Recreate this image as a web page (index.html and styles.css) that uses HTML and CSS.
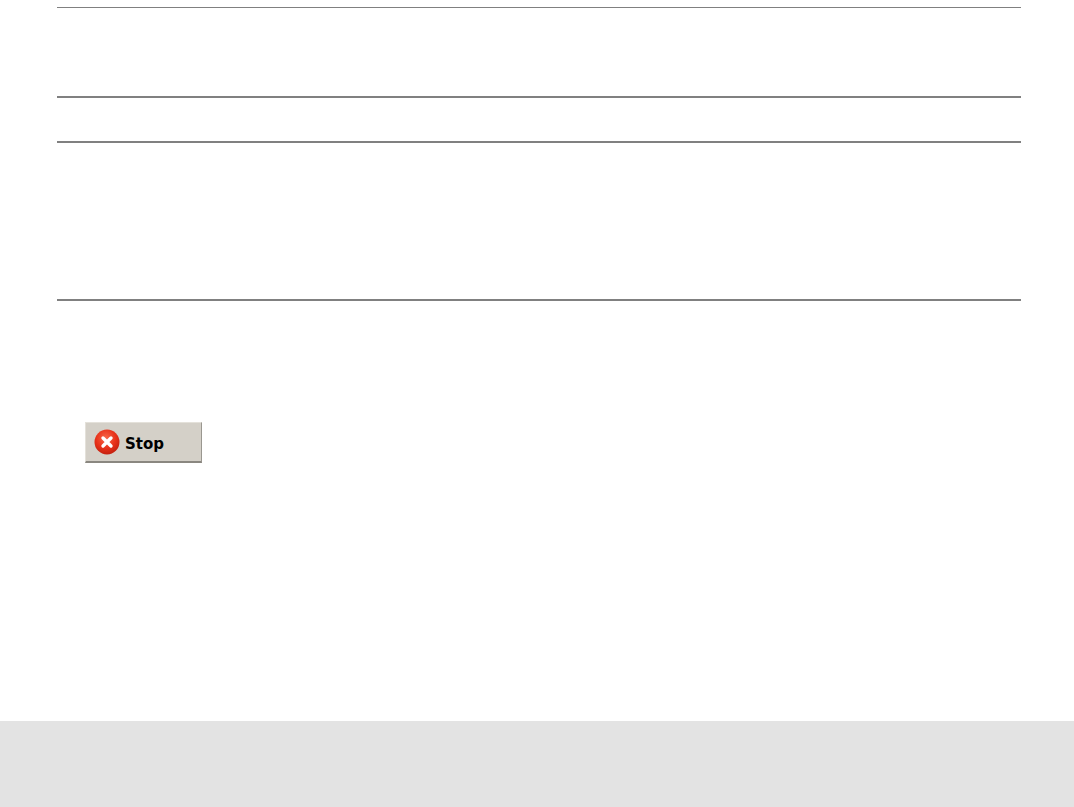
FILE: index.html
```html
<!DOCTYPE html>
<html lang="en">
<head>
    <meta charset="UTF-8">
    <title>Stop</title>
    <link rel="stylesheet" href="styles.css">
</head>
<body>
    <div class="content">
        <div class="rule rule_a"></div>
        <div class="rule rule_b"></div>
        <div class="rule rule_c"></div>
        <div class="rule rule_d"></div>
        <button class="stop_btn" type="button">
            <svg class="stop_icon" width="26" height="26" viewBox="0 0 26 26">
                <defs>
                    <radialGradient id="stopFill" cx="45%" cy="35%" r="65%">
                        <stop offset="0" stop-color="#f8694a"/>
                        <stop offset="0.6" stop-color="#e8321a"/>
                        <stop offset="1" stop-color="#c4200e"/>
                    </radialGradient>
                </defs>
                <circle cx="13" cy="13" r="12.5" fill="url(#stopFill)"/>
                <path d="M9 9 L17 17 M17 9 L9 17" stroke="#fff" stroke-width="3.4" stroke-linecap="round" fill="none"/>
            </svg>
            <span class="stop_text">Stop</span>
        </button>
    </div>
    <div class="footer"></div>
</body>
</html>
```

FILE: styles.css
```css
* {
    margin: 0;
    padding: 0;
    border: 0;
}
html, body {
    height: 100%;
    background-color: #fff;
}
body {
    display: flex;
    flex-direction: column;
    height: 807px;
    overflow: hidden;
}
.content {
    flex: 1;
    padding: 7px 53px 0 57px;
}
.rule {
    height: 2px;
    background-color: #808080;
}
.rule_a {
    height: 1px;
}
.rule_b {
    margin-top: 88px;
}
.rule_c {
    margin-top: 43px;
}
.rule_d {
    margin-top: 156px;
}
.stop_btn {
    display: flex;
    align-items: center;
    width: 117px;
    height: 41px;
    margin: 121px 0 0 28px;
    padding-left: 8px;
    background-color: #d4d0c8;
    border-right: 1px solid #9a9790;
    border-bottom: 2px solid #8a8780;
    border-top: 1px solid #e4e1da;
    border-left: 1px solid #e4e1da;
    font-family: "DejaVu Sans", sans-serif;
    font-size: 15px;
    font-weight: bold;
    color: #000;
}
.stop_icon {
    display: block;
    flex: none;
}
.stop_text {
    margin: 3px 0 0 5px;
}
.footer {
    height: 86px;
    background-color: #e3e3e3;
}
```
